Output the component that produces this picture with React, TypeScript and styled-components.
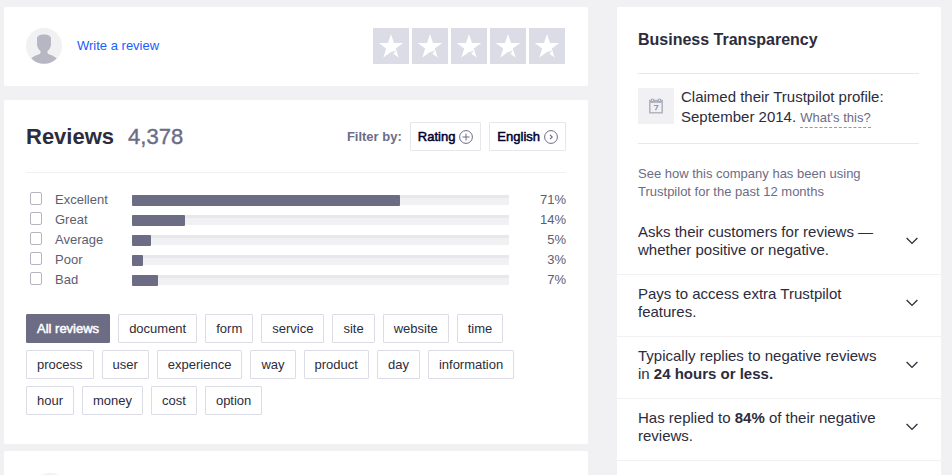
import React from "react";
import styled, { createGlobalStyle } from "styled-components";

const GlobalStyle = createGlobalStyle`
  *, *::before, *::after { box-sizing: border-box; }
  body {
    margin: 0;
    min-height: 100vh;
    background: #f1f1f4;
    color: #2c2c3c;
    font: 15px/18px "Liberation Sans", Arial, sans-serif;
    overflow: hidden;
  }
  button { font: inherit; color: inherit; cursor: pointer; margin: 0; }
  h1, h2, p, ul { margin: 0; padding: 0; }
`;

const Page = styled.main`
  display: grid;
  grid-template-columns: minmax(0, 584fr) minmax(0, 324fr);
  gap: 29px;
  height: 100vh;
  padding: 7px 11px 0 4px;
  overflow: hidden;
`;

const MainColumn = styled.div`
  display: flex;
  flex-direction: column;
`;

const Card = styled.section`
  background: #fff;
  border-radius: 2px;
`;

const WriteCard = styled(Card)`
  display: flex;
  align-items: center;
  justify-content: space-between;
  padding: 21px 23px 22px 22px;
  margin-bottom: 14px;
`;

const Author = styled.div`
  display: flex;
  align-items: center;
  gap: 15px;
`;

const WriteLink = styled.a`
  color: #1b5cff;
  font-size: 13px;
  text-decoration: none;
`;

const StarList = styled.div`
  display: flex;
  gap: 3px;
`;

const StarButton = styled.button`
  display: block;
  width: 36px;
  height: 36px;
  padding: 0;
  border: 0;
  background: #dcdce6;
  svg { display: block; }
`;

const ReviewsCard = styled(Card)`
  padding: 22px 22px 29px;
  margin-bottom: 7px;
`;

const ReviewsHeader = styled.header`
  display: flex;
  align-items: center;
  justify-content: space-between;
  padding-bottom: 21px;
  border-bottom: 1px solid #f1f1f4;
`;

const Title = styled.h1`
  display: flex;
  gap: 14px;
  font-size: 22px;
  line-height: 29px;
`;

const Count = styled.span`
  color: #6c6c85;
  font-weight: 400;
  -webkit-text-stroke: 0.4px currentColor;
`;

const Filters = styled.div`
  display: flex;
  align-items: center;
  gap: 8px;
`;

const FilterLabel = styled.span`
  color: #6c6c85;
  font-size: 13px;
  font-weight: 700;
`;

const FilterButton = styled.button`
  display: flex;
  align-items: center;
  gap: 4px;
  height: 29px;
  padding: 0 7px;
  border: 1px solid #e6e6ed;
  border-radius: 1px;
  background: #fff;
  color: #000032;
  font-size: 13px;
  -webkit-text-stroke: 0.5px currentColor;
`;

const Ratings = styled.div`
  padding: 17px 0 24px;
`;

const RatingRow = styled.label`
  display: grid;
  grid-template-columns: 29px 77px minmax(0, 1fr) 57px;
  align-items: center;
  height: 20px;
  color: #5d5d70;
  font-size: 13px;
`;

const Checkbox = styled.input`
  appearance: none;
  width: 12px;
  height: 13px;
  margin: 0 0 3px 4px;
  border: 1px solid #b4b4c3;
  border-radius: 2px;
  background: #fff;
`;

const Track = styled.span`
  display: block;
  height: 10px;
  background: linear-gradient(#e8e8ec 3px, #f1f1f4 3px);
`;

const Fill = styled.span`
  display: block;
  height: 11px;
  border-radius: 1px;
  background: #6c6c85;
`;

const Percent = styled.span`
  text-align: right;
`;

const Topics = styled.div`
  display: flex;
  flex-wrap: wrap;
  gap: 7px 8px;
  padding-right: 40px;
`;

const Topic = styled.button<{ $active?: boolean }>`
  height: 29px;
  padding: 0 10px;
  border: 1px solid ${(p) => (p.$active ? "#6c6c85" : "#dcdce6")};
  border-radius: 1px;
  background: ${(p) => (p.$active ? "#6c6c85" : "#fff")};
  color: ${(p) => (p.$active ? "#fff" : "#2c2c3c")};
  font-size: 13px;
  -webkit-text-stroke: ${(p) => (p.$active ? "0.5px" : "0")} currentColor;
`;

const NextCard = styled(Card)`
  flex: 1 0 60px;
  padding: 22px 28px;
`;

const NextAvatar = styled.div`
  width: 36px;
  height: 36px;
  border-radius: 50%;
  background: #f1f1f4;
`;

const Sidebar = styled(Card)`
  overflow: hidden;
`;

const SidebarIntro = styled.div`
  padding: 22px 22px 0 21px;
`;

const SidebarTitle = styled.h2`
  padding-bottom: 23px;
  font-size: 16px;
  font-weight: 700;
  line-height: 21px;
`;

const Claimed = styled.div`
  display: flex;
  gap: 7px;
  padding: 13px 0 16px;
  border-top: 1px solid #e8e8ec;
  border-bottom: 1px solid #e8e8ec;
  line-height: 20px;
`;

const CalendarBox = styled.span`
  display: grid;
  place-items: center;
  flex: none;
  width: 36px;
  height: 36px;
  margin-top: 1px;
  background: #f1f1f4;
`;

const HelpLink = styled.a`
  padding-bottom: 2px;
  color: #6c6c85;
  font-size: 13px;
  line-height: 18px;
  text-decoration: none;
  border-bottom: 1px dashed #8b9bb4;
`;

const Note = styled.p`
  padding: 21px 30px 12px 0;
  color: #6c6c85;
  font-size: 13px;
`;

const Fact = styled.button`
  display: flex;
  align-items: center;
  justify-content: space-between;
  width: 100%;
  padding: 10px 23px 15px 21px;
  border: 0;
  border-bottom: 1px solid #f1f1f4;
  background: #fff;
  text-align: left;
  svg { flex: none; }
`;

const FactText = styled.span`
  flex: 0 1 250px;
`;

const ratings = [
  { label: "Excellent", percent: 71 },
  { label: "Great", percent: 14 },
  { label: "Average", percent: 5 },
  { label: "Poor", percent: 3 },
  { label: "Bad", percent: 7 },
];

const topics = [
  "All reviews", "document", "form", "service", "site", "website", "time",
  "process", "user", "experience", "way", "product", "day", "information",
  "hour", "money", "cost", "option",
];

const facts: React.ReactNode[] = [
  <>Asks their customers for reviews — whether positive or negative.</>,
  <>Pays to access extra Trustpilot features.</>,
  <>Typically replies to negative reviews in <b>24 hours or less.</b></>,
  <>Has replied to <b>84%</b> of their negative reviews.</>,
];

const Avatar = () => (
  <svg width="36" height="36" viewBox="0 0 36 36" aria-hidden="true">
    <circle cx="18" cy="18" r="18" fill="#f1f1f4" />
    <path
      d="M11 10.500C11 8 14 6.500 18 6.500S25 8 25 10.500V16C25 19 23.500 21.500 21.500 23V25C21.500 26.500 27.500 27 30.700 30.500A18 18 0 0 1 5.300 30.500C8.500 27 14.500 26.500 14.500 25V23C12.500 21.500 11 19 11 16Z"
      fill="#b7b7c4"
    />
  </svg>
);

const Star = () => (
  <svg width="36" height="36" viewBox="0 0 36 36" aria-hidden="true">
    <path
      d="M18 6L21 15H30.300L22.800 20.600L25.600 29.500L18 24L10.400 29.500L13.200 20.600L5.700 15H15Z"
      fill="#fff"
    />
    <path d="M17 24.800L23 22.300L20.500 25.800L18.500 25Z" fill="#dcdce6" />
  </svg>
);

const CirclePlus = () => (
  <svg width="14" height="14" viewBox="0 0 14 14" fill="none" stroke="#6c6c85" aria-hidden="true">
    <circle cx="7" cy="7" r="6.400" />
    <path d="M7 3.500V10.500M3.500 7H10.500" />
  </svg>
);

const CircleChevron = () => (
  <svg width="14" height="14" viewBox="0 0 14 14" fill="none" stroke="#6c6c85" aria-hidden="true">
    <circle cx="7" cy="7" r="6.400" />
    <path d="M6 4.800L8.200 7L6 9.200" strokeWidth="1.200" />
  </svg>
);

const Calendar = () => (
  <svg width="14" height="16" viewBox="0 0 14 16" fill="none" aria-hidden="true">
    <path d="M0.800 2.500H13.200V14.700H0.800Z" stroke="#b4b4c3" strokeWidth="1.600" />
    <path d="M1 2.500H13V5H1Z" fill="#b4b4c3" />
    <circle cx="3.500" cy="2.200" r="1.300" fill="#f1f1f4" stroke="#8b9bb4" />
    <circle cx="10.500" cy="2.200" r="1.300" fill="#f1f1f4" stroke="#8b9bb4" />
    <path d="M4.800 7.500H8.800L6.500 12.300" stroke="#8b9bb4" strokeWidth="1.200" />
  </svg>
);

const Chevron = () => (
  <svg width="12" height="8" viewBox="0 0 12 8" fill="none" stroke="#2c2c3c" strokeWidth="1.300" aria-hidden="true">
    <path d="M0.600 1L6 6.400L11.400 1" />
  </svg>
);

export default function App() {
  return (
    <>
      <GlobalStyle />
      <Page>
        <MainColumn>
          <WriteCard>
            <Author>
              <Avatar />
              <WriteLink href="#write">Write a review</WriteLink>
            </Author>
            <StarList>
              {[1, 2, 3, 4, 5].map((n) => (
                <StarButton key={n} type="button" aria-label={`Rate ${n} of 5`}>
                  <Star />
                </StarButton>
              ))}
            </StarList>
          </WriteCard>

          <ReviewsCard>
            <ReviewsHeader>
              <Title>
                Reviews <Count>4,378</Count>
              </Title>
              <Filters>
                <FilterLabel>Filter by:</FilterLabel>
                <FilterButton type="button">
                  Rating <CirclePlus />
                </FilterButton>
                <FilterButton type="button">
                  English <CircleChevron />
                </FilterButton>
              </Filters>
            </ReviewsHeader>
            <Ratings>
              {ratings.map((r) => (
                <RatingRow key={r.label}>
                  <Checkbox type="checkbox" />
                  <span>{r.label}</span>
                  <Track>
                    <Fill style={{ width: `${r.percent}%` }} />
                  </Track>
                  <Percent>{r.percent}%</Percent>
                </RatingRow>
              ))}
            </Ratings>
            <Topics>
              {topics.map((t, i) => (
                <Topic key={t} type="button" $active={i === 0}>
                  {t}
                </Topic>
              ))}
            </Topics>
          </ReviewsCard>

          <NextCard>
            <NextAvatar />
          </NextCard>
        </MainColumn>

        <Sidebar>
          <SidebarIntro>
            <SidebarTitle>Business Transparency</SidebarTitle>
            <Claimed>
              <CalendarBox>
                <Calendar />
              </CalendarBox>
              <p>
                Claimed their Trustpilot profile: September 2014.{" "}
                <HelpLink href="#claimed">What's this?</HelpLink>
              </p>
            </Claimed>
            <Note>See how this company has been using Trustpilot for the past 12 months</Note>
          </SidebarIntro>
          {facts.map((fact, i) => (
            <Fact key={i} type="button" aria-expanded={false}>
              <FactText>{fact}</FactText>
              <Chevron />
            </Fact>
          ))}
        </Sidebar>
      </Page>
    </>
  );
}
